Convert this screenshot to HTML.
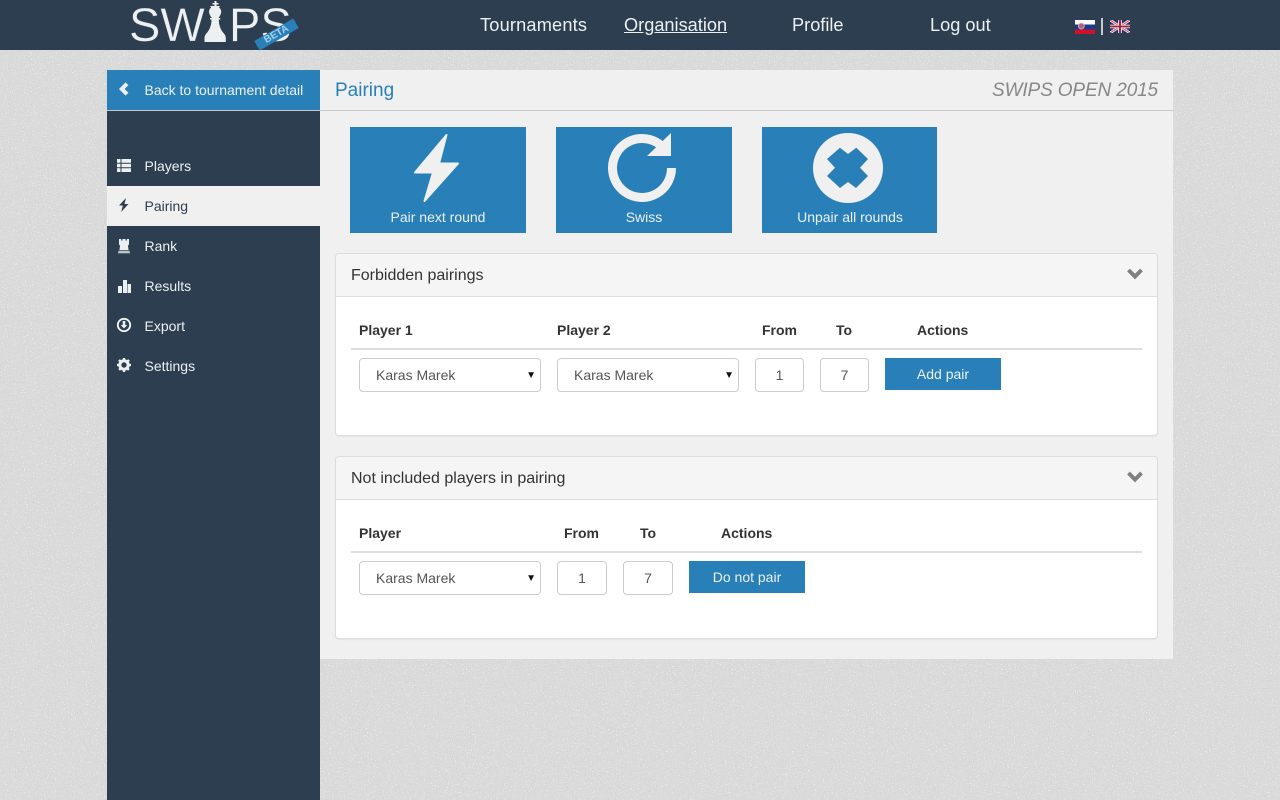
<!DOCTYPE html>
<html><head><meta charset="utf-8"><title>SWIPS</title>
<style>
*{box-sizing:border-box}
html,body{margin:0;padding:0;width:1280px;height:800px;overflow:hidden;background:#dadada;font-family:"Liberation Sans",sans-serif;font-size:14px;color:#333}
.a{position:absolute;white-space:nowrap}
#noise{position:absolute;left:0;top:0;width:1280px;height:800px}
.top{position:absolute;left:0;top:0;width:1280px;height:50px;background:#2c3e50}
.nav{font-size:18.2px;color:#ecf0f1;top:14px;line-height:22px}
.side{position:absolute;left:107px;top:70px;width:213px;height:730px;background:#2c3e50}
.back{position:absolute;left:107px;top:70px;width:213px;height:40px;background:#2980b9;color:#ecf0f1;line-height:40px;padding-left:37.500px}
.mi{position:absolute;left:107px;width:213px;height:40px;line-height:40px;padding-left:37.500px;color:#ecf0f1}
.mi svg{position:absolute;left:9px;top:12px}
.mi.on{background:#f0f0f0;color:#2c3e50}
.main{position:absolute;left:320px;top:70px;width:853px;height:589px;background:#f0f0f0}
.head{position:absolute;left:320px;top:70px;width:853px;height:41px;border-bottom:1px solid #c8c8c8;background:#f0f0f0}
.big{position:absolute;top:127px;height:106px;background:#2980b9;color:#ecf0f1;text-align:center}
.big span{position:absolute;left:0;right:0;top:82px;line-height:16px}
.big svg{position:absolute}
.panel{position:absolute;left:335px;width:823px;background:#fff;border:1px solid #ddd;border-radius:4px;box-shadow:0 1px 1px rgba(0,0,0,.05)}
.ph{position:absolute;left:0;top:0;right:0;height:43px;background:#f5f5f5;border-bottom:1px solid #ddd;border-radius:3px 3px 0 0;font-size:16px;line-height:44px;padding-left:15px;color:#333}
.th{font-weight:bold;line-height:20px;color:#333}
.line{position:absolute;height:2px;background:#ddd}
.sel,.inp{position:absolute;height:34px;background:#fff;border:1px solid #ccc;border-radius:4px;color:#555;line-height:32px}
.sel{width:182px;padding-left:16px}
.sel i{position:absolute;right:4px;top:1px;font-style:normal;font-size:10px;color:#111}
.inp{text-align:center}
.btn{position:absolute;height:32px;background:#2980b9;color:#ecf0f1;text-align:center;line-height:32px;width:116px}
.chev{position:absolute}
.logo{font-size:47px;line-height:54px;color:#ecf0f1;-webkit-text-stroke:.3px #2c3e50}
</style></head><body>
<svg id="noise" xmlns="http://www.w3.org/2000/svg"><filter id="n" x="0" y="0" width="100%" height="100%"><feTurbulence type="fractalNoise" baseFrequency="0.95" numOctaves="1" seed="4"/><feColorMatrix type="matrix" values="0 0 0 0 0.62  0 0 0 0 0.62  0 0 0 0 0.62  9 0 0 0 -5.600"/></filter><filter id="w" x="0" y="0" width="100%" height="100%"><feTurbulence type="fractalNoise" baseFrequency="0.95" numOctaves="1" seed="11"/><feColorMatrix type="matrix" values="0 0 0 0 0.94  0 0 0 0 0.94  0 0 0 0 0.94  9 0 0 0 -5.800"/></filter><rect width="1280" height="800" filter="url(#n)"/><rect width="1280" height="800" filter="url(#w)"/></svg>
<div class="top"></div>
<div class="a logo" style="left:129px;top:-2px">SW</div>
<svg class="a" style="left:203px;top:0" width="25" height="43" viewBox="0 0 25 43"><path fill="#ecf0f1" d="M11.500 1h2v2h2v1.500h-2V6h3.500l-1 1.500c2 1.500 2.800 4 1.800 6.500l-1.500 3h-.5v1h1.500v1.500h-1.500c0 5 1.500 9 3.500 12 1.500 2 3.500 3.500 3.500 6.500v4H1.500v-4c0-3 2-4.500 3.500-6.500 2-3 3.500-7 3.500-12H7V18h1.500v-1H8L6.500 14c-1-2.500-.3-5 1.700-6.500L7 6h4.500V4.500h-2V3h2z"/></svg>
<div class="a logo" style="left:229px;top:-2px">PS</div>
<div class="a" style="left:254px;top:28.500px;width:45px;height:11px;background:#2980b9;transform:rotate(-30deg);color:#a9cfe8;font-size:10px;line-height:11px;text-align:center;font-weight:bold">BETA</div>
<div class="a nav" style="left:480px;letter-spacing:.18px">Tournaments</div>
<div class="a nav" style="left:624px;text-decoration:underline">Organisation</div>
<div class="a nav" style="left:792px">Profile</div>
<div class="a nav" style="left:930px">Log out</div>
<svg class="a" style="left:1075px;top:20px" width="20" height="14" viewBox="0 0 20 14"><rect width="20" height="4.500" fill="#fff"/><rect y="4.500" width="20" height="5" fill="#1a3a8c"/><rect y="9.500" width="20" height="4.500" fill="#d0102c"/><circle cx="6.300" cy="6" r="3" fill="#b85c78" stroke="#d8c8d0" stroke-width=".7"/></svg>
<div class="a" style="left:1101px;top:18px;width:2px;height:17px;background:#c8ccd0"></div>
<svg class="a" style="left:1110px;top:20px" width="20" height="13" viewBox="0 0 20 13"><rect width="20" height="13" fill="#26306e"/><path d="M0 0L20 13M20 0L0 13" stroke="#fff" stroke-width="2.600"/><path d="M0 0L20 13M20 0L0 13" stroke="#c8283c" stroke-width=".9"/><path d="M10 0V13M0 6.500H20" stroke="#fff" stroke-width="3.600"/><path d="M10 0V13M0 6.500H20" stroke="#a82840" stroke-width="2"/></svg>

<div class="side"></div>
<div class="a" style="left:107px;top:110px;width:213px;height:1px;background:#c8c8c8"></div>
<div class="back">Back to tournament detail</div>
<svg class="a" style="left:118px;top:82px" width="12" height="14" viewBox="0 0 12 14"><path d="M9 1.800L3.800 7 9 12.200" fill="none" stroke="#ecf0f1" stroke-width="4"/></svg>

<div class="mi" style="top:146px"><svg width="16" height="16" viewBox="0 0 16 16"><path fill="#ecf0f1" d="M1 1h14v13H1z"/><path d="M5 1v13M1 5.300h14M1 9.700h14" stroke="#2c3e50" stroke-width="1"/></svg>Players</div>
<div class="mi on" style="top:186px"><svg style="top:11px" width="16" height="16" viewBox="0 0 16 16"><path fill="#2c3e50" d="M10 1L3 8.500h3.800L5.200 15 12.500 7H8.500z"/></svg>Pairing</div>
<div class="mi" style="top:226px"><svg width="16" height="16" viewBox="0 0 16 16"><path fill="#ecf0f1" d="M3 1h2.200v1.500h1.300V1H9.500v1.500h1.300V1H13v5.500l-1 1 .5 4.500H3.500l.5-4.500-1-1zM2.500 12.800h11v1h-11zM2 14.300h12v1H2z"/></svg>Rank</div>
<div class="mi" style="top:266px"><svg width="16" height="16" viewBox="0 0 16 16"><path fill="#ecf0f1" d="M2 8h4v7H2zM7 2h4v13H7zM11.500 6H15v9h-3.500z"/></svg>Results</div>
<div class="mi" style="top:306px"><svg style="top:11px" width="16" height="16" viewBox="0 0 16 16"><circle cx="8" cy="8" r="6.200" fill="none" stroke="#ecf0f1" stroke-width="1.900"/><path fill="#ecf0f1" d="M6.700 4h2.600v4h2L8 11.500 4.700 8h2z"/></svg>Export</div>
<div class="mi" style="top:346px"><svg style="top:11px" width="16" height="16" viewBox="0 0 16 16"><circle cx="8" cy="8" r="4.200" fill="none" stroke="#ecf0f1" stroke-width="3"/><path d="M8 1v14M1 8h14M3 3l10 10M13 3L3 13" stroke="#ecf0f1" stroke-width="2.400" stroke-dasharray="2.600 8.800 2.600"/></svg>Settings</div>

<div class="main"></div>
<div class="head"></div>
<div class="a" style="left:335px;top:79px;font-size:19px;line-height:24px;color:#2980b9">Pairing</div>
<div class="a" style="right:122px;top:79px;font-size:19px;line-height:24px;color:#888;font-style:italic;letter-spacing:-.13px">SWIPS OPEN 2015</div>

<div class="big" style="left:350px;width:176px"><svg style="left:62px;top:6px" width="48" height="72" viewBox="0 0 48 72"><path fill="#f0f0f0" stroke="#f0f0f0" stroke-width="2" stroke-linejoin="round" d="M34.500 2L3 39.500H21L12.500 68 46 30.500H27z"/></svg><span>Pair next round</span></div>
<div class="big" style="left:556px;width:176px"><svg style="left:50px;top:5px" width="72" height="72" viewBox="0 0 72 72"><path d="M65.500 36A29.500 29.500 0 1 1 55 13.400" fill="none" stroke="#f0f0f0" stroke-width="9"/><path d="M65 1v23H41z" fill="#f0f0f0"/></svg><span>Swiss</span></div>
<div class="big" style="left:762px;width:175px"><svg style="left:50px;top:5px" width="72" height="72" viewBox="0 0 72 72"><circle cx="36" cy="36" r="35" fill="#f0f0f0"/><path fill="#2980b9" d="M28 15.700L36 22 44.300 15.700 56 27 48 35.700 56 44 44 56 36 50 28 56 15 44 23 35.700 15 27z"/></svg><span style="right:-1px">Unpair all rounds</span></div>

<div class="panel" style="top:253px;height:183px"><div class="ph">Forbidden pairings</div></div>
<svg class="chev" style="left:1126px;top:267px" width="18" height="14" viewBox="0 0 18 14"><path d="M2.500 3L9 9.500 15.500 3" fill="none" stroke="#808080" stroke-width="4"/></svg>
<div class="a th" style="left:359px;top:320px">Player 1</div>
<div class="a th" style="left:557px;top:320px">Player 2</div>
<div class="a th" style="left:762px;top:320px">From</div>
<div class="a th" style="left:836px;top:320px">To</div>
<div class="a th" style="left:917px;top:320px">Actions</div>
<div class="line" style="left:351px;top:348px;width:791px"></div>
<div class="sel" style="left:359px;top:358px">Karas Marek<i>▼</i></div>
<div class="sel" style="left:557px;top:358px">Karas Marek<i>▼</i></div>
<div class="inp" style="left:755px;top:358px;width:49px">1</div>
<div class="inp" style="left:820px;top:358px;width:49px">7</div>
<div class="btn" style="left:885px;top:358px">Add pair</div>

<div class="panel" style="top:456px;height:183px"><div class="ph">Not included players in pairing</div></div>
<svg class="chev" style="left:1126px;top:470px" width="18" height="14" viewBox="0 0 18 14"><path d="M2.500 3L9 9.500 15.500 3" fill="none" stroke="#808080" stroke-width="4"/></svg>
<div class="a th" style="left:359px;top:523px">Player</div>
<div class="a th" style="left:564px;top:523px">From</div>
<div class="a th" style="left:640px;top:523px">To</div>
<div class="a th" style="left:721px;top:523px">Actions</div>
<div class="line" style="left:351px;top:551px;width:791px"></div>
<div class="sel" style="left:359px;top:561px">Karas Marek<i>▼</i></div>
<div class="inp" style="left:557px;top:561px;width:50px">1</div>
<div class="inp" style="left:623px;top:561px;width:50px">7</div>
<div class="btn" style="left:689px;top:561px">Do not pair</div>
</body></html>
